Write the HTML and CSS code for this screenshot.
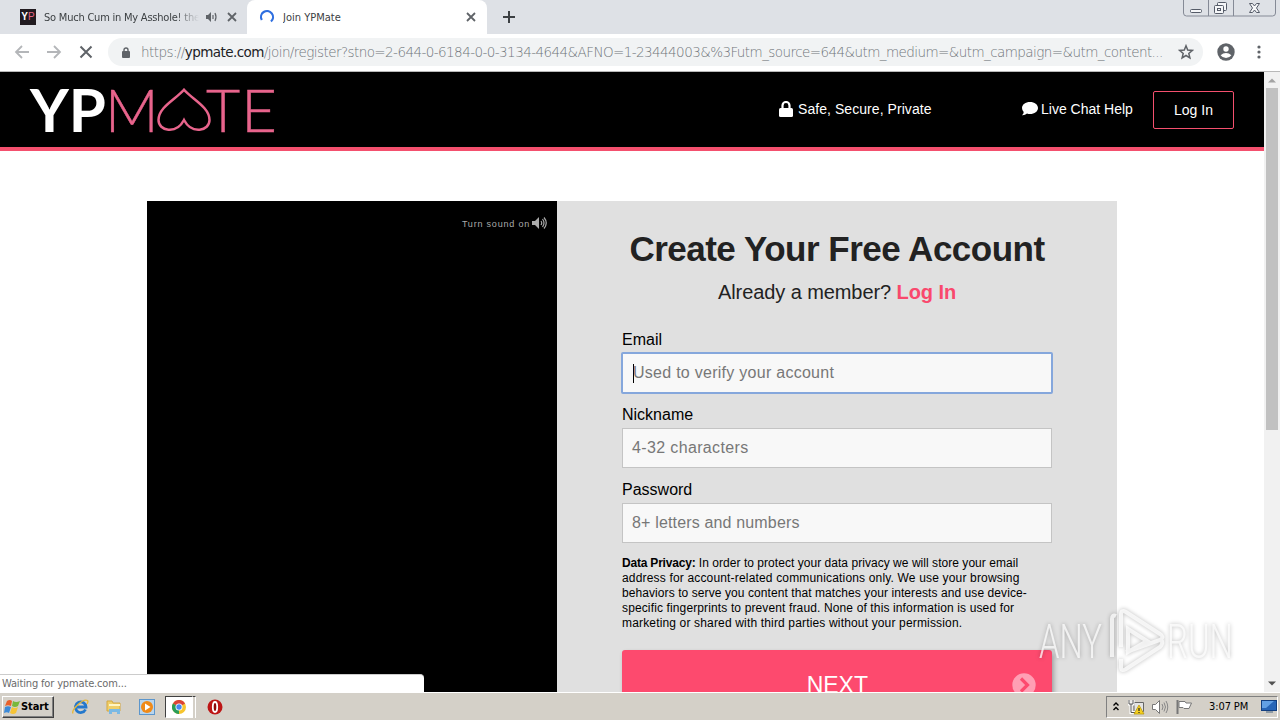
FILE: index.html
```
<!DOCTYPE html>
<html lang="en">
<head>
    <meta charset="UTF-8">
    <title>Join YPMate</title>
    <link rel="stylesheet" href="styles.css">
</head>
<body>
    <div class="tabstrip">
        <div class="tab tab-back">
            <span class="favicon"><b>Y</b>P</span>
            <span class="tab-title fade">So Much Cum in My Asshole! the</span>
            <svg class="tab-sound" width="12" height="10" viewBox="0 0 12 10"><path d="M0 3h2l3-3v10L2 7H0z" fill="#5f6368"/><path d="M7 3v4M9 1q2 4 0 8" fill="none" stroke="#5f6368" stroke-width="1.2"/></svg>
            <svg class="tab-close" width="10" height="10" viewBox="0 0 10 10"><path d="M1 1l8 8M9 1L1 9" stroke="#5f6368" stroke-width="1.8"/></svg>
        </div>
        <div class="tab tab-active">
            <svg class="spinner" width="16" height="16" viewBox="0 0 16 16"><path d="M2.800 11A6 6 0 1 1 12 12.500" fill="none" stroke="#2f6fe0" stroke-width="2.2"/></svg>
            <span class="tab-title">Join YPMate</span>
            <svg class="tab-close" width="10" height="10" viewBox="0 0 10 10"><path d="M1 1l8 8M9 1L1 9" stroke="#5f6368" stroke-width="1.8"/></svg>
        </div>
        <svg class="new-tab" width="12" height="12" viewBox="0 0 12 12"><path d="M6 0v12M0 6h12" stroke="#3c4043" stroke-width="2"/></svg>
        <svg class="window-buttons" width="94" height="18" viewBox="0 0 94 18">
            <path d="M.5 0v13q0 3 3 3h86q3 0 3-3V0M25.500 0v16M50.500 0v16" fill="none" stroke="#858a96"/>
            <rect x="7.500" y="9.500" width="11" height="3" rx="1" fill="#f5f6f8" stroke="#555b68"/>
            <g fill="#f5f6f8" stroke="#555b68"><rect x="34.500" y="2.500" width="9" height="8" rx="1"/><rect x="31.500" y="5.500" width="9" height="8" rx="1"/><rect x="34.500" y="8.500" width="3" height="2"/></g>
            <path d="M66.500 3.500h3l2 2.500 2-2.500h3L73.500 8l3 4.500h-3l-2-2.500-2 2.500h-3l3-4.500z" fill="#f5f6f8" stroke="#555b68"/>
        </svg>
    </div>

    <div class="toolbar">
        <svg class="nav" width="16" height="14" viewBox="0 0 16 14"><path d="M15 7H2M8 1L2 7l6 6" fill="none" stroke="#b4b6b9" stroke-width="1.8"/></svg>
        <svg class="nav" width="16" height="14" viewBox="0 0 16 14"><path d="M1 7h13M8 1l6 6-6 6" fill="none" stroke="#b4b6b9" stroke-width="1.8"/></svg>
        <svg class="nav" width="16" height="14" viewBox="0 0 16 14"><path d="M2.500 1.500l11 11M13.500 1.500l-11 11" stroke="#5f6368" stroke-width="2"/></svg>
        <div class="omnibox">
            <svg width="8" height="11" viewBox="0 0 8 11"><path d="M2 5V3a2 2 0 0 1 4 0v2" fill="none" stroke="#5f6368" stroke-width="1.400"/><rect y="4" width="8" height="7" rx="1" fill="#5f6368"/></svg>
            <span class="url">https://<b>ypmate.com</b>/join/register?stno=2-644-0-6184-0-0-3134-4644&amp;AFNO=1-23444003&amp;%3Futm_source=644&amp;utm_medium=&amp;utm_campaign=&amp;utm_content...</span>
            <svg class="star" width="16" height="16" viewBox="0 0 16 16"><path d="M8 1.800l1.700 4.300 4.600.3-3.500 3 1.100 4.500L8 11.500l-3.900 2.400 1.100-4.500-3.500-3 4.600-.3z" fill="none" stroke="#5f6368" stroke-width="1.500"/></svg>
        </div>
        <svg class="avatar" width="18" height="18" viewBox="0 0 18 18"><circle cx="9" cy="9" r="8.700" fill="#5f6368"/><circle cx="9" cy="6" r="2.700" fill="#fff"/><path d="M3.600 12.300Q6 10 9 10t5.400 2.300Q12.500 15 9 15t-5.400-2.700z" fill="#fff"/></svg>
        <svg class="dots" width="4" height="14" viewBox="0 0 4 14" fill="#5f6368"><circle cx="2" cy="2" r="1.600"/><circle cx="2" cy="7" r="1.600"/><circle cx="2" cy="12" r="1.600"/></svg>
    </div>

    <div class="viewport">
        <div class="page">
            <header class="site-header">
                <svg class="logo" width="246" height="46" viewBox="0 0 246 46">
                    <text class="logo-bold" x="0" y="43.500" textLength="76" lengthAdjust="spacingAndGlyphs">YP</text>
                    <text class="logo-thin" x="75" y="43.500">M</text>
                    <path class="logo-heart" d="M154 1.700C146 11 128.500 19 128.500 32c0 11 17.500 15 25.500 0 8 15 25.500 11 25.500 0 0-13-17.500-21-25.500-30.300z"/>
                    <text class="logo-thin" x="176" y="43.500">T</text>
                    <text class="logo-thin" x="211" y="43.500" textLength="36" lengthAdjust="spacingAndGlyphs">E</text>
                </svg>
                <span class="secure">
                    <svg width="14" height="16" viewBox="0 0 14 16"><path d="M3.500 8V4.500a3.500 3.500 0 0 1 7 0V8" fill="none" stroke="#fff" stroke-width="2.200"/><rect y="7" width="14" height="9" rx="1.500" fill="#fff"/></svg>
                    <span class="secure-text">Safe, Secure, Private</span>
                </span>
                <span class="chat">
                    <svg width="16" height="14" viewBox="0 0 16 14"><path d="M8 0c4.500 0 8 2.600 8 6s-3.500 6-8 6q-1.500 0-3-.5Q3 13.500 0 13.300q1.700-1.600 1.700-3.300Q0 8.300 0 6c0-3.400 3.500-6 8-6z" fill="#fff"/></svg>
                    <span class="chat-text">Live Chat Help</span>
                </span>
                <a class="login-button">Log In</a>
            </header>

            <main class="join">
                <div class="video">
                    <span class="sound-text">Turn sound on</span>
                    <svg width="15" height="12" viewBox="0 0 15 12"><path d="M0 4h3l4-4v12L3 8H0z" fill="#aaa"/><path d="M9 4q1.500 2 0 4M10.500 2q3 4 0 8M12 .5q4.500 5.500 0 11" fill="none" stroke="#aaa" stroke-width="1.200"/></svg>
                </div>
                <form class="signup">
                    <h1>Create Your Free Account</h1>
                    <p class="member">Already a member? <a>Log In</a></p>
                    <label class="label-email">Email</label>
                    <div class="field focused"><i class="caret"></i><span class="ph-email">Used to verify your account</span></div>
                    <label>Nickname</label>
                    <div class="field"><span class="ph-nick">4-32 characters</span></div>
                    <label>Password</label>
                    <div class="field"><span class="ph-pass">8+ letters and numbers</span></div>
                    <p class="privacy">
                        <span class="line l1"><b>Data Privacy:</b> In order to protect your data privacy we will store your email</span>
                        <span class="line l2">address for account-related communications only. We use your browsing</span>
                        <span class="line l3">behaviors to serve you content that matches your interests and use device-</span>
                        <span class="line l4">specific fingerprints to prevent fraud. None of this information is used for</span>
                        <span class="line l5">marketing or shared with third parties without your permission.</span>
                    </p>
                    <div class="next">
                        <span class="next-text">NEXT</span>
                        <svg class="next-icon" width="24" height="24" viewBox="0 0 24 24"><circle cx="12" cy="12" r="11.700" fill="#ff9fb4"/><path d="M9 5.500l6.500 6.500L9 18.500" fill="none" stroke="#fd4a6e" stroke-width="3.200"/></svg>
                    </div>
                </form>
            </main>
        </div>
        <div class="scrollbar">
            <svg width="8" height="5" viewBox="0 0 8 5"><path d="M0 4.500L4 .5l4 4z" fill="#a3a3a3"/></svg>
            <div class="thumb"></div>
            <svg width="8" height="5" viewBox="0 0 8 5"><path d="M0 .5l4 4 4-4z" fill="#505050"/></svg>
        </div>
        <div class="status">Waiting for ypmate.com...</div>
        <svg class="watermark" width="200" height="70" viewBox="0 0 200 70">
            <text x="3" y="51" textLength="63" lengthAdjust="spacingAndGlyphs">ANY</text>
            <path d="M76 50V12q0-5 4-3M85 40V8q0-6 5-3l34 22q5 3 0 6L90 45M85 52v8q0 5 5 2l34-22q4-4 1-8M92 22v23l19-11z"/>
            <text x="131" y="51" textLength="66" lengthAdjust="spacingAndGlyphs">RUN</text>
        </svg>
    </div>

    <div class="taskbar">
        <div class="start">
            <svg width="17" height="16" viewBox="0 0 17 16"><path d="M3 2q3-2 5 0L7 7Q4 5.500 1 7z" fill="#e8612c"/><path d="M9 2q3 2 7 0l-2 5q-3 2-6 0z" fill="#79b83b"/><path d="M1 8q3-1.500 6 0l-2 6q-2-1.500-5 0z" fill="#3c8ad8"/><path d="M8 8q3 2 6 0l-2 6q-3 2-6 0z" fill="#f6c436"/></svg>
            <span>Start</span>
        </div>
        <svg class="task-ie" width="17" height="16" viewBox="0 0 17 16"><path d="M13.500 10.500A5.300 5.300 0 1 1 14 8H5" fill="none" stroke="#2478cc" stroke-width="2.800"/><path d="M1 14.500C-1 11 11-1 15.500 1.500q1 1-.5 3.500" fill="none" stroke="#e6b83c" stroke-width="1.400"/></svg>
        <svg class="task-folder" width="16" height="16" viewBox="0 0 16 16"><path d="M1 2h5l1 2h7v8H1z" fill="#f0cf69" stroke="#d3a843"/><path d="M3 5h11v2H3z" fill="#fff5c5"/><path d="M3 15v-5h11v5h-3v-2H6v2z" fill="#7ab9e4"/></svg>
        <svg class="task-media" width="16" height="16" viewBox="0 0 16 16"><rect x=".5" y=".5" width="15" height="15" fill="#b9d5ed" stroke="#5c96cc"/><circle cx="8" cy="8" r="6" fill="#f08a18"/><path d="M6 4.500v7L11.500 8z" fill="#fff"/></svg>
        <div class="task-chrome">
            <svg width="14" height="14" viewBox="0 0 14 14"><circle cx="7" cy="7" r="7" fill="#f7c52d"/><path d="M7 7L.9 3.500A7 7 0 0 1 13.100 3.500z" fill="#db4437"/><path d="M7 7v7A7 7 0 0 1 .9 3.500z" fill="#2a9d58"/><circle cx="7" cy="7" r="3.500" fill="#fff"/><circle cx="7" cy="7" r="2.700" fill="#4688f1"/></svg>
        </div>
        <i class="task-edge"></i>
        <svg class="task-opera" width="16" height="16" viewBox="0 0 16 16"><circle cx="8" cy="8" r="7.500" fill="#bd1515"/><ellipse cx="8" cy="8" rx="2.200" ry="5" fill="#8e0909" stroke="#fff" stroke-width="1.800"/></svg>
        <div class="tray">
            <svg class="chevrons" width="6" height="9" viewBox="0 0 6 9"><path d="M.5 3.500L3 1l2.500 2.500M.5 8L3 5.500 5.500 8" fill="none" stroke="#000" stroke-width="1.400"/></svg>
            <svg width="17" height="16" viewBox="0 0 17 16"><path d="M6 3.500h9.500v9H6z" fill="#e4e4e4" stroke="#666"/><path d="M1 1v4h4V1M3 5v8.500h5" fill="none" stroke="#fff" stroke-width="3"/><path d="M1 1v4h4V1M3 5v8.500h5" fill="none" stroke="#555"/><path d="M11 6l5 9H6z" fill="#f5cf20" stroke="#b39200" stroke-width=".7"/><path d="M11 9v3M11 13v1" stroke="#222" stroke-width="1.200"/></svg>
            <svg width="17" height="14" viewBox="0 0 17 14"><path d="M.5 4.500h3l4-4v13l-4-4h-3z" fill="#fff" stroke="#777"/><path d="M10 4q2 3 0 6M12 2.500q3 4.500 0 9M14 1q3.500 6 0 12" fill="none" stroke="#888"/></svg>
            <svg width="17" height="16" viewBox="0 0 17 16"><path d="M1.500 1v14" stroke="#777" stroke-width="2"/><path d="M3 2.500h6l1 1.500h5.500L13 9.500H8L7 8.500H3z" fill="#fff" stroke="#777"/></svg>
            <span class="clock">3:07 PM</span>
            <svg width="16" height="13" viewBox="0 0 16 13"><rect x=".5" y=".5" width="15" height="10" fill="#2765b7" stroke="#123f80"/><path d="M1 1h12L5 8H1z" fill="#62a0e4"/><path d="M5 12h7" stroke="#789" stroke-width="1.500"/></svg>
        </div>
    </div>
</body>
</html>
```
FILE: styles.css
```
* {
    box-sizing: border-box;
}

body {
    margin: 0;
    width: 1280px;
    height: 720px;
    overflow: hidden;
    font-family: "Liberation Sans", Arial, sans-serif;
    background: #fff;
    color: #000;
}

svg {
    display: block;
    flex: none;
}

/* browser chrome */
.tabstrip {
    display: flex;
    height: 34px;
    background: #dee1e6;
    font-family: "DejaVu Sans Condensed", "DejaVu Sans", sans-serif;
    font-size: 11px;
}

.tab {
    display: flex;
    align-items: center;
    height: 34px;
    color: #3c4043;
    white-space: nowrap;
}

.tab-back {
    width: 247px;
    padding-left: 20px;
}

.tab-active {
    width: 240px;
    padding-left: 12px;
    background: #fff;
    border-radius: 8px 8px 0 0;
}

.favicon {
    width: 16px;
    height: 16px;
    margin-right: 8px;
    background: #211b20;
    color: #e56484;
    font: 10px/16px "Liberation Sans", sans-serif;
    text-align: center;
}

.favicon b {
    color: #fff;
}

.tab-title {
    width: 155px;
    margin-right: -1px;
    overflow: hidden;
    letter-spacing: -0.22px;
}

.tab-active .tab-title {
    margin-left: 1px;
    margin-right: -2px;
    letter-spacing: 0;
}

.fade {
    -webkit-mask-image: linear-gradient(to right, #000 85%, transparent);
    mask-image: linear-gradient(to right, #000 85%, transparent);
}

.tab-sound {
    margin-left: 8px;
}

.tab-back .tab-close {
    margin-left: 9px;
}

.spinner {
    margin-right: 7px;
}

.tab-active .tab-close {
    margin-left: 30px;
}

.new-tab {
    margin: 11px 0 0 16px;
}

.window-buttons {
    margin-left: auto;
    margin-right: 3px;
}

.toolbar {
    display: flex;
    align-items: center;
    height: 38px;
    padding-left: 14px;
    background: #fff;
    border-bottom: 1px solid #b8b8b8;
}

.toolbar > svg,
.omnibox {
    margin-bottom: 1px;
}

.nav {
    margin-right: 16px;
}

.omnibox {
    display: flex;
    align-items: center;
    width: 1095px;
    height: 28px;
    margin-left: -2px;
    padding: 0 9px 0 14px;
    background: #f1f3f4;
    border-radius: 14px;
}

.url {
    margin-left: 11px;
    color: #70757a;
    font-family: "DejaVu Sans", sans-serif;
    font-weight: 200;
    font-size: 13.5px;
    letter-spacing: -0.57px;
    white-space: nowrap;
}

.url b {
    color: #202124;
    font-weight: 400;
}

.star {
    margin-left: auto;
}

.avatar {
    margin-left: 14px;
}

.dots {
    margin-left: 22px;
}

.viewport {
    position: relative;
    display: flex;
    height: 620px;
    overflow: hidden;
}

.page {
    width: 1264px;
    background: #fff;
}

.site-header {
    display: flex;
    align-items: center;
    height: 79px;
    padding: 0 30px;
    background: #000;
    border-bottom: 4px solid #f4506e;
    color: #fff;
    font-size: 14px;
}

.logo {
    margin-top: 2px;
    overflow: visible;
    font-family: Lato, sans-serif;
}

.logo-bold {
    fill: #fff;
    font-size: 59px;
    font-weight: 700;
}

.logo-thin {
    fill: #e8648c;
    stroke: #e8648c;
    stroke-width: 0.4;
    font-size: 59px;
    font-weight: 300;
}

.logo-heart {
    fill: none;
    stroke: #e8648c;
    stroke-width: 2.5;
}

.secure {
    display: flex;
    align-items: center;
    margin-left: 503px;
    width: 243px;
    gap: 5px;
    margin-bottom: 2px;
}

.chat {
    display: flex;
    align-items: center;
    width: 131px;
    margin-bottom: 2px;
    gap: 3px;
    white-space: nowrap;
}

.secure-text {
    letter-spacing: 0.06px;
}

.login-button {
    width: 81px;
    height: 38px;
    margin-top: 1px;
    border: 1px solid #f4506e;
    border-radius: 2px;
    line-height: 37px;
    text-align: center;
}

.join {
    display: flex;
    width: 970px;
    height: 600px;
    margin: 50px auto 0;
}

.video {
    display: flex;
    align-items: flex-start;
    justify-content: flex-end;
    width: 410px;
    padding: 16px 10px 0 0;
    gap: 2px;
    background: #000;
    color: #aaa;
    font-size: 9px;
}

.sound-text {
    letter-spacing: 0.8px;
    line-height: 15px;
}

.signup {
    width: 560px;
    padding: 0 65px;
    background: #e0e0e0;
}

h1 {
    margin: 28px -20px 0;
    color: #222;
    font-size: 35px;
    letter-spacing: -0.5px;
    line-height: 40px;
    text-align: center;
    white-space: nowrap;
}

.member {
    margin: 11px 0 0;
    color: #222;
    font-size: 20px;
    letter-spacing: -0.08px;
    line-height: 24px;
    text-align: center;
}

.member a {
    color: #f9486d;
    font-weight: bold;
}

label {
    display: block;
    height: 35px;
    padding-top: 12px;
    font-size: 16px;
    line-height: 20px;
}

.label-email {
    height: 48px;
    padding-top: 26px;
}

.field {
    display: flex;
    align-items: center;
    height: 40px;
    padding-left: 9px;
    background: #f8f8f8;
    border: 1px solid #c4c4c4;
    color: #777;
    font-size: 16px;
}

.focused {
    height: 42px;
    margin: 0 -1px -1px;
    padding-left: 10px;
    border: 2px solid #85a7dc;
    border-radius: 2px;
}

.ph-email {
    letter-spacing: 0.27px;
}

.ph-nick {
    letter-spacing: 0.36px;
}

.ph-pass {
    letter-spacing: 0.16px;
}

.caret {
    width: 1px;
    height: 19px;
    margin-right: -1px;
    background: #000;
}

.privacy {
    margin: 13px 0 0;
    font-size: 12px;
}

.line {
    display: block;
    height: 15px;
    line-height: 15px;
    white-space: nowrap;
}

.l1 {
    letter-spacing: 0.04px;
}

.l1 b {
    letter-spacing: -0.2px;
}

.l2 {
    letter-spacing: 0.17px;
}

.l3 {
    letter-spacing: 0.08px;
}

.l4 {
    letter-spacing: 0.13px;
}

.l5 {
    letter-spacing: 0.16px;
}

.next {
    display: flex;
    justify-content: flex-end;
    margin-top: 19px;
    height: 68px;
    padding-right: 16px;
    background: #fd4a6e;
    border-radius: 3px;
    box-shadow: 2px 3px 5px rgba(0, 0, 0, 0.3);
    color: #fff;
    font-size: 23px;
    line-height: 70px;
}

.next-text {
    margin-right: 144px;
}

.next-icon {
    margin-top: 23px;
}

.scrollbar {
    display: flex;
    flex-direction: column;
    align-items: center;
    width: 16px;
    padding: 6px 0;
    background: #f1f1f1;
}

.thumb {
    width: 12px;
    height: 342px;
    margin: 5px 0 auto;
    background: #c1c1c1;
}

.status {
    position: absolute;
    left: 0;
    bottom: 0;
    width: 424px;
    height: 18px;
    padding-left: 2px;
    background: #fff;
    border-top: 1px solid #ccc;
    border-radius: 0 4px 0 0;
    color: #6b6b6b;
    font: 11px/18px "DejaVu Sans Condensed", sans-serif;
    letter-spacing: -0.15px;
}

.watermark {
    position: absolute;
    right: 44px;
    bottom: 15px;
    font-family: Roboto, sans-serif;
    font-size: 49px;
    font-weight: 300;
    fill: rgba(255, 255, 255, 0.75);
    filter: drop-shadow(0 0 2px rgba(0, 0, 0, 0.35));
}

.watermark path {
    fill: none;
    stroke: rgba(255, 255, 255, 0.75);
    stroke-width: 4;
}

/* windows taskbar */
.taskbar {
    display: flex;
    align-items: center;
    height: 28px;
    padding: 0 2px;
    background: #d4d0c8;
    border-top: 1px solid #fff;
    font-family: "DejaVu Sans Condensed", sans-serif;
    font-size: 11px;
}

.start {
    display: flex;
    align-items: center;
    width: 52px;
    height: 22px;
    padding-left: 1px;
    border: 1px solid;
    border-color: #fff #404040 #404040 #fff;
    box-shadow: inset -1px -1px #808080;
    font-weight: bold;
    letter-spacing: -0.1px;
}

.task-ie {
    margin-left: 18px;
}

.task-folder,
.task-media {
    margin-left: 17px;
}

.task-chrome {
    width: 28px;
    height: 22px;
    margin-left: 10px;
    padding: 3px 0 0 6px;
    background: #fff;
    border: 1px solid;
    border-color: #404040 #fff #fff #404040;
}

.task-edge {
    width: 3px;
    height: 22px;
    border-top: 1px solid #404040;
    border-right: 1px solid #fff;
}

.task-opera {
    margin-left: 11px;
}

.tray {
    display: flex;
    align-items: center;
    width: 172px;
    height: 22px;
    margin-left: auto;
    padding-left: 6px;
    gap: 7px;
    border: 1px solid;
    border-color: #808080 #fff #fff #808080;
}

.chevrons {
    margin-right: 2px;
}

.clock {
    width: 41px;
    margin: 0 4px 0 9px;
    letter-spacing: -0.1px;
    white-space: nowrap;
}
```
